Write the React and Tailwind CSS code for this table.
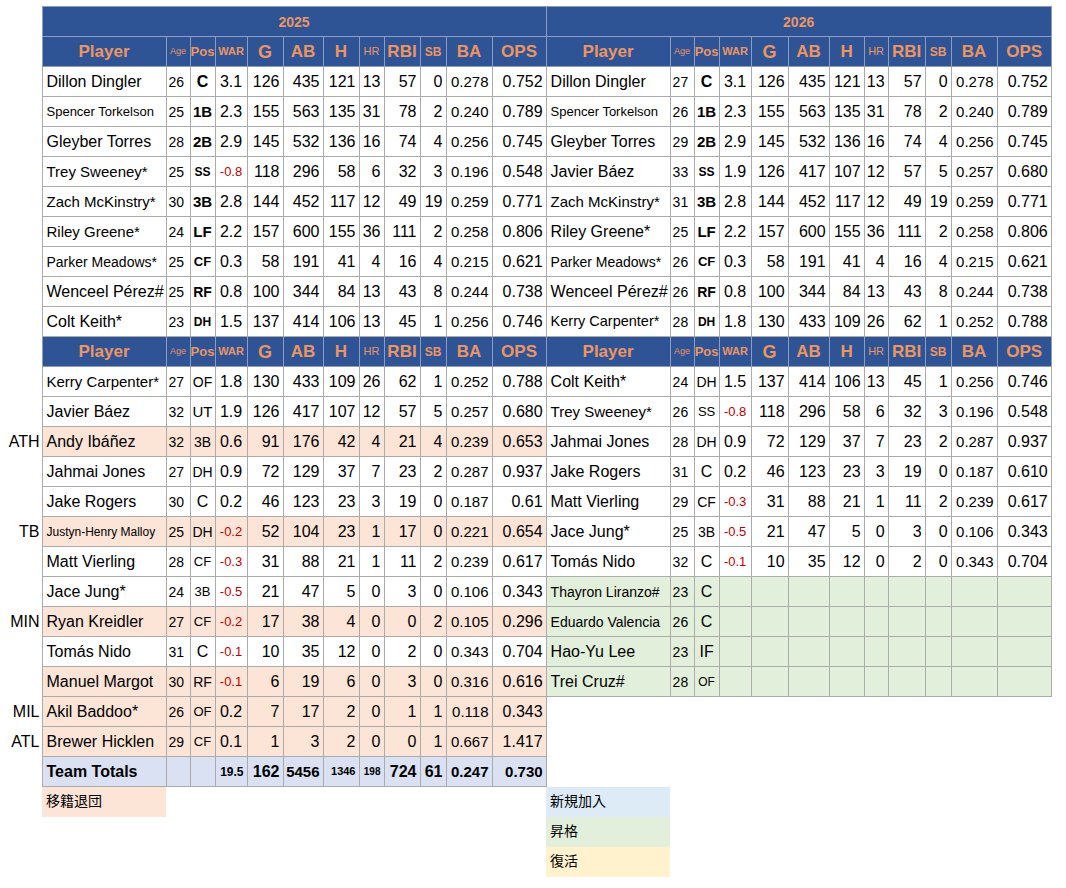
import React from "react";

const top25 = [
  ["Dillon Dingler", "text-[16px]", "26", "C", "font-bold text-[16px]", "3.1", "126", "435", "121", "13", "57", "0", "0.278", "0.752"],
  ["Spencer Torkelson", "text-[13px]", "25", "1B", "font-bold text-[15px]", "2.3", "155", "563", "135", "31", "78", "2", "0.240", "0.789"],
  ["Gleyber Torres", "text-[16px]", "28", "2B", "font-bold text-[15px]", "2.9", "145", "532", "136", "16", "74", "4", "0.256", "0.745"],
  ["Trey Sweeney*", "text-[15px]", "25", "SS", "font-bold text-[12px]", "-0.8", "118", "296", "58", "6", "32", "3", "0.196", "0.548"],
  ["Zach McKinstry*", "text-[15px]", "30", "3B", "font-bold text-[15px]", "2.8", "144", "452", "117", "12", "49", "19", "0.259", "0.771"],
  ["Riley Greene*", "text-[15px]", "24", "LF", "font-bold text-[15px]", "2.2", "157", "600", "155", "36", "111", "2", "0.258", "0.806"],
  ["Parker Meadows*", "text-[14px]", "25", "CF", "font-bold text-[13px]", "0.3", "58", "191", "41", "4", "16", "4", "0.215", "0.621"],
  ["Wenceel Pérez#", "text-[16px]", "25", "RF", "font-bold text-[14px]", "0.8", "100", "344", "84", "13", "43", "8", "0.244", "0.738"],
  ["Colt Keith*", "text-[16px]", "23", "DH", "font-bold text-[12px]", "1.5", "137", "414", "106", "13", "45", "1", "0.256", "0.746"],
];

const top26 = [
  ["Dillon Dingler", "text-[16px]", "27", "C", "font-bold text-[16px]", "3.1", "126", "435", "121", "13", "57", "0", "0.278", "0.752"],
  ["Spencer Torkelson", "text-[13px]", "26", "1B", "font-bold text-[15px]", "2.3", "155", "563", "135", "31", "78", "2", "0.240", "0.789"],
  ["Gleyber Torres", "text-[16px]", "29", "2B", "font-bold text-[15px]", "2.9", "145", "532", "136", "16", "74", "4", "0.256", "0.745"],
  ["Javier Báez", "text-[16px]", "33", "SS", "font-bold text-[12px]", "1.9", "126", "417", "107", "12", "57", "5", "0.257", "0.680"],
  ["Zach McKinstry*", "text-[15px]", "31", "3B", "font-bold text-[15px]", "2.8", "144", "452", "117", "12", "49", "19", "0.259", "0.771"],
  ["Riley Greene*", "text-[16px]", "25", "LF", "font-bold text-[15px]", "2.2", "157", "600", "155", "36", "111", "2", "0.258", "0.806"],
  ["Parker Meadows*", "text-[14px]", "26", "CF", "font-bold text-[13px]", "0.3", "58", "191", "41", "4", "16", "4", "0.215", "0.621"],
  ["Wenceel Pérez#", "text-[16px]", "26", "RF", "font-bold text-[14px]", "0.8", "100", "344", "84", "13", "43", "8", "0.244", "0.738"],
  ["Kerry Carpenter*", "text-[14.5px]", "28", "DH", "font-bold text-[12px]", "1.8", "130", "433", "109", "26", "62", "1", "0.252", "0.788"],
];

// [team, bg, row]
const low25 = [
  ["", "", ["Kerry Carpenter*", "text-[15px]", "27", "OF", "text-[14px]", "1.8", "130", "433", "109", "26", "62", "1", "0.252", "0.788"]],
  ["", "", ["Javier Báez", "text-[16px]", "32", "UT", "text-[15px]", "1.9", "126", "417", "107", "12", "57", "5", "0.257", "0.680"]],
  ["ATH", "bg-[#fce4d6]", ["Andy Ibáñez", "text-[16px]", "32", "3B", "text-[14px]", "0.6", "91", "176", "42", "4", "21", "4", "0.239", "0.653"]],
  ["", "", ["Jahmai Jones", "text-[16px]", "27", "DH", "text-[14px]", "0.9", "72", "129", "37", "7", "23", "2", "0.287", "0.937"]],
  ["", "", ["Jake Rogers", "text-[16px]", "30", "C", "text-[16px]", "0.2", "46", "123", "23", "3", "19", "0", "0.187", "0.61"]],
  ["TB", "bg-[#fce4d6]", ["Justyn-Henry Malloy", "text-[12px]", "25", "DH", "text-[14px]", "-0.2", "52", "104", "23", "1", "17", "0", "0.221", "0.654"]],
  ["", "", ["Matt Vierling", "text-[16px]", "28", "CF", "text-[13px]", "-0.3", "31", "88", "21", "1", "11", "2", "0.239", "0.617"]],
  ["", "", ["Jace Jung*", "text-[16px]", "24", "3B", "text-[13px]", "-0.5", "21", "47", "5", "0", "3", "0", "0.106", "0.343"]],
  ["MIN", "bg-[#fce4d6]", ["Ryan Kreidler", "text-[16px]", "27", "CF", "text-[13px]", "-0.2", "17", "38", "4", "0", "0", "2", "0.105", "0.296"]],
  ["", "", ["Tomás Nido", "text-[16px]", "31", "C", "text-[16px]", "-0.1", "10", "35", "12", "0", "2", "0", "0.343", "0.704"]],
  ["", "bg-[#fce4d6]", ["Manuel Margot", "text-[16px]", "30", "RF", "text-[14px]", "-0.1", "6", "19", "6", "0", "3", "0", "0.316", "0.616"]],
  ["MIL", "bg-[#fce4d6]", ["Akil Baddoo*", "text-[16px]", "26", "OF", "text-[13px]", "0.2", "7", "17", "2", "0", "1", "1", "0.118", "0.343"]],
  ["ATL", "bg-[#fce4d6]", ["Brewer Hicklen", "text-[16px]", "29", "CF", "text-[13px]", "0.1", "1", "3", "2", "0", "0", "1", "0.667", "1.417"]],
];

const low26 = [
  ["", ["Colt Keith*", "text-[16px]", "24", "DH", "text-[14px]", "1.5", "137", "414", "106", "13", "45", "1", "0.256", "0.746"]],
  ["", ["Trey Sweeney*", "text-[15px]", "26", "SS", "text-[13px]", "-0.8", "118", "296", "58", "6", "32", "3", "0.196", "0.548"]],
  ["", ["Jahmai Jones", "text-[16px]", "28", "DH", "text-[14px]", "0.9", "72", "129", "37", "7", "23", "2", "0.287", "0.937"]],
  ["", ["Jake Rogers", "text-[16px]", "31", "C", "text-[16px]", "0.2", "46", "123", "23", "3", "19", "0", "0.187", "0.610"]],
  ["", ["Matt Vierling", "text-[16px]", "29", "CF", "text-[14px]", "-0.3", "31", "88", "21", "1", "11", "2", "0.239", "0.617"]],
  ["", ["Jace Jung*", "text-[16px]", "25", "3B", "text-[14px]", "-0.5", "21", "47", "5", "0", "3", "0", "0.106", "0.343"]],
  ["", ["Tomás Nido", "text-[16px]", "32", "C", "text-[16px]", "-0.1", "10", "35", "12", "0", "2", "0", "0.343", "0.704"]],
  ["bg-[#e2efda]", ["Thayron Liranzo#", "text-[14px]", "23", "C", "text-[16px]"]],
  ["bg-[#e2efda]", ["Eduardo Valencia", "text-[14px]", "26", "C", "text-[16px]"]],
  ["bg-[#e2efda]", ["Hao-Yu Lee", "text-[16px]", "23", "IF", "text-[16px]"]],
  ["bg-[#e2efda]", ["Trei Cruz#", "text-[16px]", "28", "OF", "text-[12px]"]],
];

const heads = [
  ["Player", "text-[17px] font-bold"],
  ["Age", "text-[9px]"],
  ["Pos", "text-[13px] font-bold"],
  ["WAR", "text-[11px] font-bold"],
  ["G", "text-[18px] font-bold"],
  ["AB", "text-[17px] font-bold"],
  ["H", "text-[17px] font-bold"],
  ["HR", "text-[11px]"],
  ["RBI", "text-[17px] font-bold"],
  ["SB", "text-[12px] font-bold"],
  ["BA", "text-[17px] font-bold"],
  ["OPS", "text-[17px] font-bold"],
];

const cell = "border border-[#ababab] h-[30px] p-0 whitespace-nowrap overflow-hidden leading-none";
const blueCell = "border border-[#8d9dc0] h-[30px] p-0 bg-[#2f5496] text-[#ec955f] text-center whitespace-nowrap leading-none";

function HeadHalf() {
  return heads.map(([t, c]) => (
    <td key={t} className={`${blueCell} ${c}`}>
      {t}
    </td>
  ));
}

function Blank({ n }) {
  return Array.from({ length: n }, (_, i) => <td key={i} className="h-[30px] p-0" />);
}

function Half({ r, bg = "" }) {
  const [name, nameSize, age, pos, posCls, war, ...rest] = r;
  const neg = war && war.startsWith("-");
  const stats = rest.slice(0, 6);
  return (
    <>
      <td className={`${cell} ${bg} ${nameSize} text-left pl-[4px]`}>{name}</td>
      <td className={`${cell} ${bg} text-[14px] text-left pl-[2px]`}>{age}</td>
      <td className={`${cell} ${bg} ${posCls} text-center`}>{pos}</td>
      <td className={`${cell} ${bg} text-center ${neg ? "text-[13px] text-[#c00000]" : "text-[16px]"}`}>{war}</td>
      {Array.from({ length: 6 }, (_, i) => (
        <td key={i} className={`${cell} ${bg} text-[16px] text-right pr-[3px]`}>
          {stats[i]}
        </td>
      ))}
      <td className={`${cell} ${bg} text-[15px] text-right pr-[3px]`}>{rest[6]}</td>
      <td className={`${cell} ${bg} text-[16px] text-right pr-[3px]`}>{rest[7]}</td>
    </>
  );
}

function Label({ t }) {
  return <td className="h-[30px] p-0 pr-[2px] text-right text-[16px] whitespace-nowrap">{t}</td>;
}

function Totals() {
  const b = "bg-[#d9e1f2] font-bold";
  return (
    <>
      <td className={`${cell} ${b} text-[16px] text-left pl-[4px]`}>Team Totals</td>
      <td className={`${cell} ${b}`} />
      <td className={`${cell} ${b}`} />
      <td className={`${cell} ${b} text-[12px] text-right pr-[3px]`}>19.5</td>
      <td className={`${cell} ${b} text-[16px] text-right pr-[3px]`}>162</td>
      <td className={`${cell} ${b} text-[15px] text-right pr-[3px]`}>5456</td>
      <td className={`${cell} ${b} text-[11px] text-right pr-[3px]`}>1346</td>
      <td className={`${cell} ${b} text-[10px] text-right pr-[3px]`}>198</td>
      <td className={`${cell} ${b} text-[16px] text-right pr-[3px]`}>724</td>
      <td className={`${cell} ${b} text-[16px] text-right pr-[3px]`}>61</td>
      <td className={`${cell} ${b} text-[15px] text-right pr-[3px]`}>0.247</td>
      <td className={`${cell} ${b} text-[15px] text-right pr-[3px]`}>0.730</td>
    </>
  );
}

function Legend({ t, bg }) {
  return <td className={`h-[30px] p-0 pl-[4px] text-[14px] text-left ${bg}`}>{t}</td>;
}

const widths = [42, 124, 24, 25, 32, 36, 40, 36, 25, 36, 26, 46, 54, 124, 24, 25, 32, 37, 41, 35, 24, 37, 26, 46, 54];

export default function App() {
  const lowRows = [];
  for (let i = 0; i < 14; i++) {
    const l = low25[i];
    const r = low26[i];
    lowRows.push(
      <tr key={"l" + i}>
        <Label t={l ? l[0] : ""} />
        {l ? <Half r={l[2]} bg={l[1]} /> : <Totals />}
        {r ? <Half r={r[1]} bg={r[0]} /> : <Blank n={12} />}
      </tr>
    );
  }

  return (
    <div className="bg-white min-h-screen w-[1066px] pt-[6px] font-['Liberation_Sans','Noto_Sans_CJK_JP',sans-serif] text-black">
      <table className="table-fixed border-collapse w-[1051px]">
        <colgroup>
          {widths.map((w, i) => (
            <col key={i} style={{ width: w }} />
          ))}
        </colgroup>
        <tbody>
          <tr>
            <Label t="" />
            <td colSpan={12} className={`${blueCell} text-[14px] font-bold`}>
              2025
            </td>
            <td colSpan={12} className={`${blueCell} text-[14px] font-bold`}>
              2026
            </td>
          </tr>
          <tr>
            <Label t="" />
            <HeadHalf />
            <HeadHalf />
          </tr>
          {top25.map((r, i) => (
            <tr key={"t" + i}>
              <Label t="" />
              <Half r={r} />
              <Half r={top26[i]} />
            </tr>
          ))}
          <tr>
            <Label t="" />
            <HeadHalf />
            <HeadHalf />
          </tr>
          {lowRows}
          <tr>
            <Label t="" />
            <Legend t="移籍退団" bg="bg-[#fce4d6]" />
            <Blank n={11} />
            <Legend t="新規加入" bg="bg-[#ddebf7]" />
            <Blank n={11} />
          </tr>
          <tr>
            <Label t="" />
            <Blank n={12} />
            <Legend t="昇格" bg="bg-[#e2efda]" />
            <Blank n={11} />
          </tr>
          <tr>
            <Label t="" />
            <Blank n={12} />
            <Legend t="復活" bg="bg-[#fff2cc]" />
            <Blank n={11} />
          </tr>
        </tbody>
      </table>
    </div>
  );
}
